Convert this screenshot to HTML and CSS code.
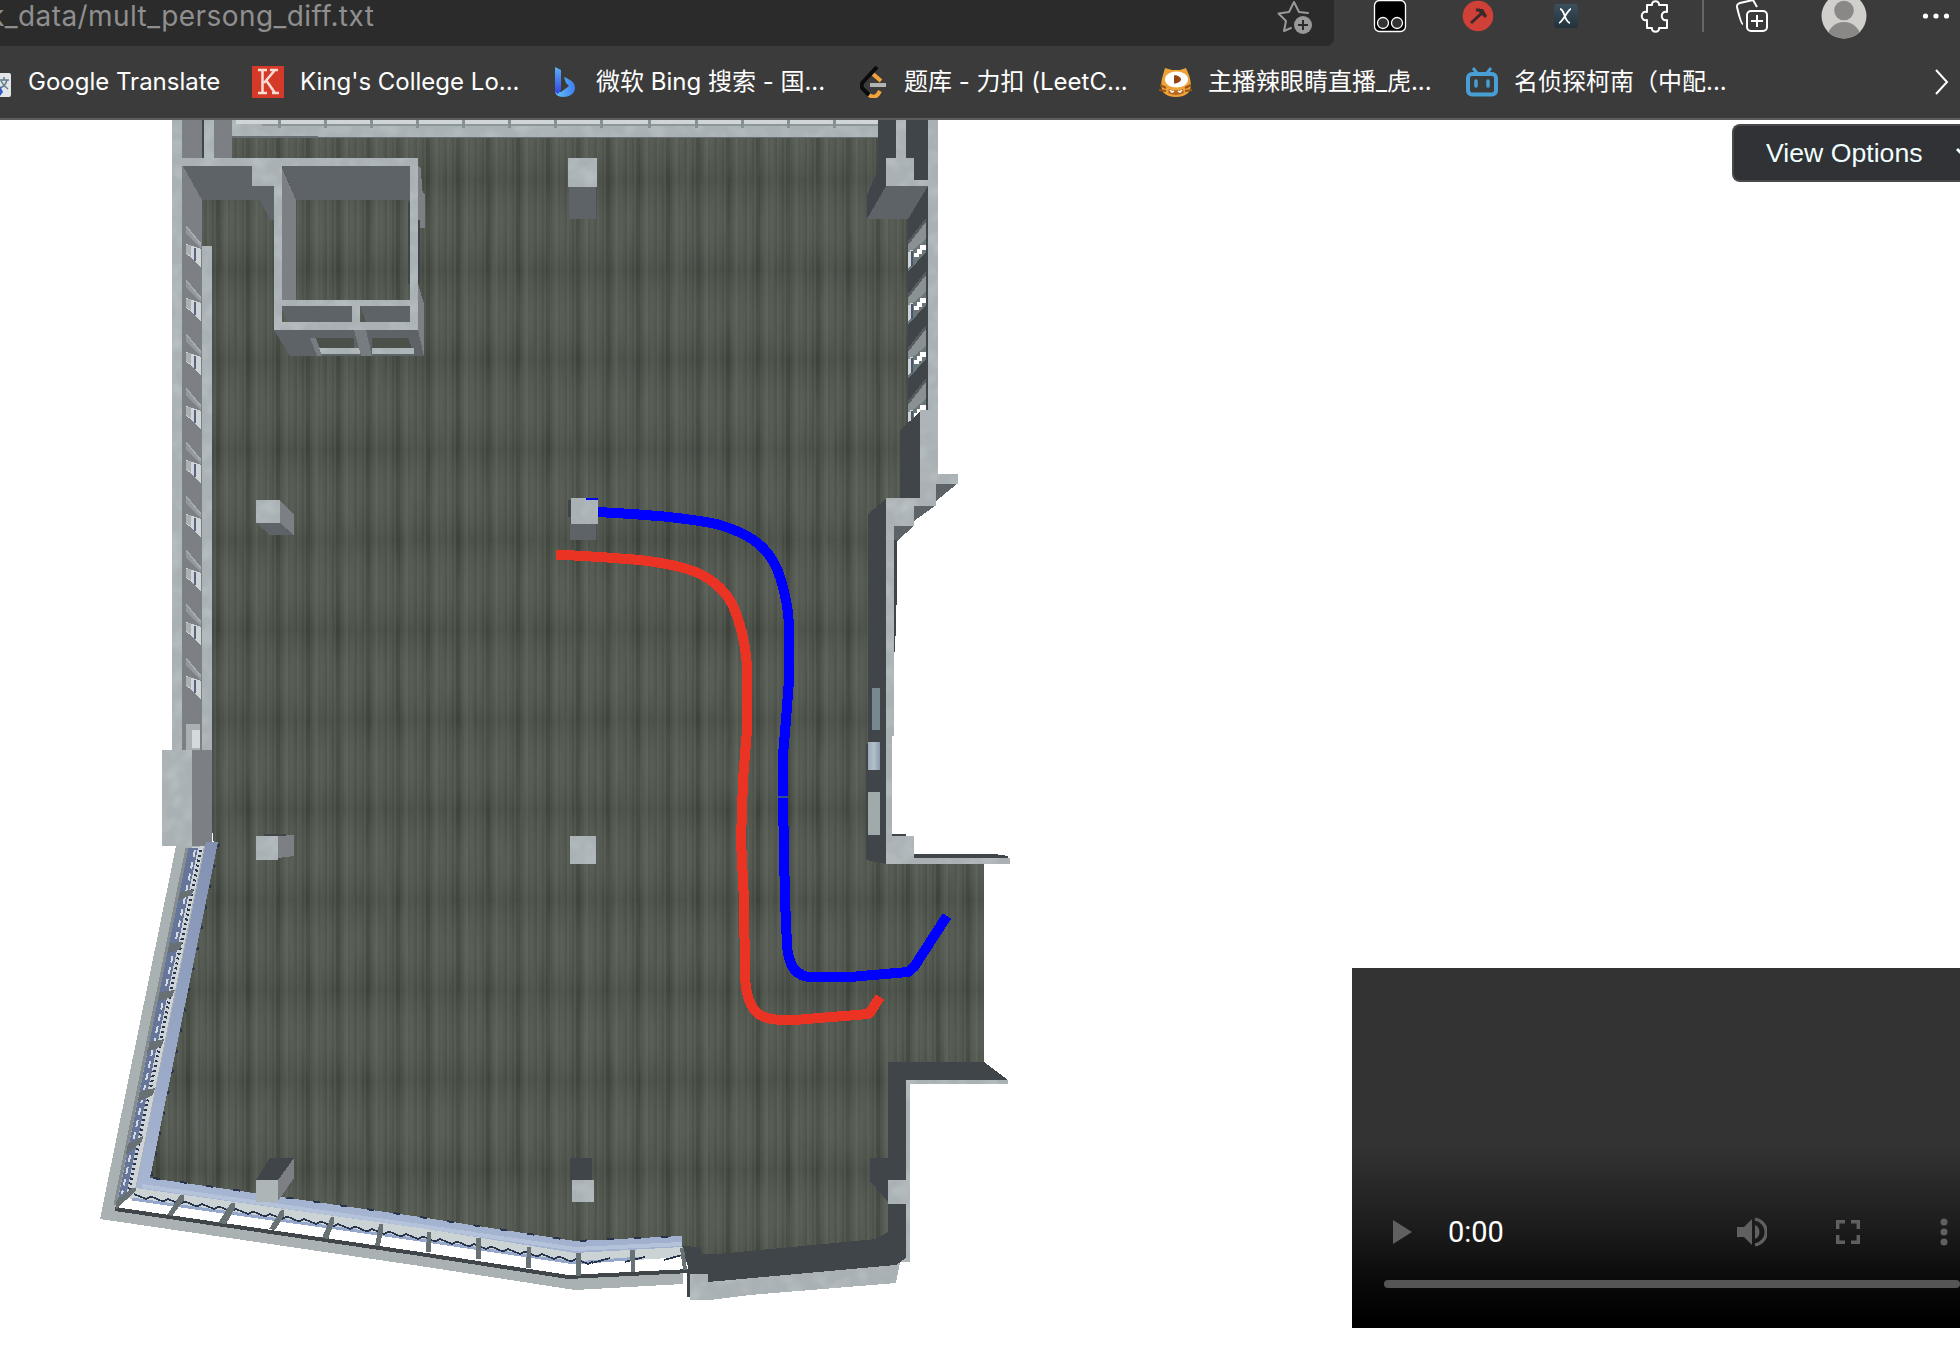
FILE: index.html
```html
<!DOCTYPE html>
<html lang="en">
<head>
<meta charset="utf-8">
<title>mult_persong_diff.txt</title>
<link rel="stylesheet" href="styles.css">
</head>
<body>
<header class="chrome">
  <div class="toolbar">
    <div class="address"><span class="url">k_data/mult_persong_diff.txt</span>
      <svg class="star" width="36" height="36" viewBox="0 0 36 36"><path d="M31 13 22 12 17 2 12 12 1.500 13.500 9 21 7 31 14 28" fill="none" stroke="#999" stroke-width="2" stroke-linejoin="round" stroke-linecap="round"/><circle cx="26" cy="25" r="9" fill="#999"/><path d="M26 20v10M21 25h10" stroke="#2b2b2b" stroke-width="2"/></svg>
    </div>
    <svg class="tools" width="626" height="46" viewBox="1334 0 626 46">
      <rect x="1374.500" y=".5" width="31" height="31" rx="5" fill="#000" stroke="#fff" stroke-width="1.300"/>
      <circle cx="1383" cy="23" r="5.500" fill="#333" stroke="#fff" stroke-width="1.300"/><circle cx="1397" cy="23" r="5.500" fill="#333" stroke="#fff" stroke-width="1.300"/>
      <circle cx="1478" cy="16" r="15.300" fill="#cf4037"/><path d="M1471 23 1483 12M1476 10l3 0 7 7" fill="none" stroke="#3b2a29" stroke-width="3"/><path d="M1475 9h8l4 7z" fill="#3b2a29"/>
      <rect x="1554" y="4" width="24" height="24" rx="3" fill="url(#xg)"/><path d="M1560 9c5 0 4 13 10 14M1571 9c-3 0-8 13-12 14" fill="none" stroke="#fff" stroke-width="1.800"/>
      <path d="M1647 5h5c-1-5 8-5 7 0h8v7c-7-2-7 10 0 8v8h-8c1 5-8 5-7 0h-5v-8c-7 2-7-10 0-8z" fill="none" stroke="#fff" stroke-width="2" stroke-linejoin="round"/>
      <path d="M1703 0v32" stroke="#666" stroke-width="2"/>
      <path d="M1743 24c-2 0-6-17-6-17-.5-3 1-3 3-4l13-3 4 7" fill="none" stroke="#fff" stroke-width="2"/><rect x="1747" y="11" width="20" height="20" rx="4" fill="#3b3b3b" stroke="#fff" stroke-width="2"/><path d="M1757 15v12M1751 21h12" stroke="#fff" stroke-width="2"/>
      <clipPath id="av"><circle cx="1844" cy="16" r="22.500"/></clipPath><g clip-path="url(#av)"><rect x="1821" y="-7" width="46" height="46" fill="#d0cfcc"/><circle cx="1844" cy="10.500" r="9.800" fill="#898886"/><circle cx="1844" cy="39" r="17" fill="#898886"/></g>
      <g fill="#fff"><circle cx="1925.500" cy="16" r="2.600"/><circle cx="1936" cy="16" r="2.600"/><circle cx="1946.500" cy="16" r="2.600"/></g>
      <defs><linearGradient id="xg" x2="0" y2="1"><stop stop-color="#3b4f5c"/><stop offset="1" stop-color="#22323b"/></linearGradient></defs>
    </svg>
  </div>
  <nav class="bookmarks">
    <a class="bm bm-translate"><svg width="12" height="32"><rect x="-10" y="7" width="21" height="24" rx="2" fill="#e3e6e8"/><path d="M0 14h9M4 11v3M7 14c-1 4-4 7-7 8M1 15c2 4 4 6 7 8" stroke="#607d8b" stroke-width="1.500" fill="none"/><path d="M0 20l3 6-3 4z" fill="#3556c8"/></svg><span>Google Translate</span></a>
    <a class="bm bm-kings"><svg width="32" height="32"><rect width="32" height="32" fill="#d53a28"/><path d="M6 4h9M6 27h9M18 4h8M20 27h7M10.500 4v23M23 4 12 17M14 14l9 13" stroke="#f7ddd6" stroke-width="2.500" fill="none"/></svg><span>King's College Lo...</span></a>
    <a class="bm bm-bing"><svg width="22" height="32"><defs><linearGradient id="b1" x2="0" y2="1"><stop stop-color="#5bb2f7"/><stop offset="1" stop-color="#3045e0"/></linearGradient><linearGradient id="b2"><stop stop-color="#62c8f5"/><stop offset="1" stop-color="#3f7cf0"/></linearGradient></defs><path d="M10 11c7 3 11 5 11 11 0 6-6 9-12 9C4 31 1 28 1 25l6 1 8-6-3-3z" fill="url(#b2)"/><path d="M1 1 7 4V24L4 28 1 26Z" fill="url(#b1)"/></svg><span>微软 Bing 搜索 - 国...</span></a>
    <a class="bm bm-leet"><svg width="26" height="32"><path d="M13 8l8 7M9 29c6 4 9 0 11-4" stroke="#f2a33c" stroke-width="4" fill="none"/><path d="M17 1 3 16q-3 4 0 7l6 6" stroke="#0b0b0b" stroke-width="4" fill="none"/><path d="M10 19h16" stroke="#b3b3b3" stroke-width="4"/></svg><span>题库 - 力扣 (LeetC...</span></a>
    <a class="bm bm-huya"><svg width="33" height="32"><path d="M4 9 6 2l7 2h8l6-2 3 7c5 16-1 22-13 22S-1 25 4 9z" fill="#eda338"/><path d="M1 19l6 3M0 24l7 1M32 19l-6 3M33 24l-7 1" stroke="#9c5416" stroke-width="2"/><ellipse cx="17.500" cy="13.500" rx="11.500" ry="8" fill="#fff"/><path d="M15 9.500c3-1 7 2 7 4s-4 4-7 4z" fill="#934513"/><path d="M10 23q7 2.500 14 0l1 4q-8 4-16 0z" fill="#b9691f"/><path d="M11 24l2 2 2-1M19 25l2 1 2-2" stroke="#fff" stroke-width="1.500" fill="none"/></svg><span>主播辣眼睛直播_虎...</span></a>
    <a class="bm bm-bili"><svg width="33" height="32" fill="none" stroke="#489fd5"><rect x="3" y="8" width="28" height="20.500" rx="4" stroke-width="4"/><path d="M8 2l4 5M26 2l-4 5" stroke-width="3"/><path d="M11 15v5M23 15v5" stroke-width="3.500" stroke-linecap="round"/></svg><span>名侦探柯南（中配...</span></a>
    <svg class="more" width="16" height="26"><path d="M2 1 13 13 2 25" fill="none" stroke="#fff" stroke-width="2"/></svg>
  </nav>
</header>
<main class="page">
<svg class="plan" width="1300" height="1252" viewBox="0 120 1300 1252">
  <defs>
    <pattern id="planks" width="30" height="90" patternUnits="userSpaceOnUse">
      <rect width="30" height="90" fill="#4f554d"/><rect x="2" width="2" height="90" fill="#484e46"/><rect x="6" width="4" height="90" fill="#41473f"/><rect x="10" width="2" height="90" fill="#4a5048"/><rect x="14" width="2" height="90" fill="#555b53"/><rect x="16" width="2" height="90" fill="#596057"/><rect x="20" width="3" height="90" fill="#535951"/><rect x="25" width="2" height="90" fill="#4a5048"/><rect x="27" width="2" height="90" fill="#555b53"/>
    </pattern>
    <linearGradient id="bands" x1="0" y1="0" x2="0" y2="90" gradientUnits="userSpaceOnUse" spreadMethod="repeat"><stop stop-color="#000" stop-opacity=".06"/><stop offset=".5" stop-color="#fff" stop-opacity=".03"/><stop offset="1" stop-color="#000" stop-opacity=".06"/></linearGradient>
    <filter id="grain" x="0" y="0" width="1" height="1" color-interpolation-filters="sRGB"><feTurbulence type="fractalNoise" baseFrequency=".13 .012" numOctaves="2" seed="4"/><feColorMatrix values="0 0 0 0 .38  0 0 0 0 .41  0 0 0 0 .37  1.600 0 0 0 -.55"/><feComposite in2="SourceGraphic" operator="in"/></filter>
    <filter id="mottle" x="0" y="0" width="1" height="1" color-interpolation-filters="sRGB"><feTurbulence type="fractalNoise" baseFrequency=".06" numOctaves="2" seed="8"/><feColorMatrix values="0 0 0 0 .74  0 0 0 0 .77  0 0 0 0 .78  1.500 0 0 0 -.6"/><feComposite in2="SourceGraphic" operator="in" result="n"/><feMerge><feMergeNode in="SourceGraphic"/><feMergeNode in="n"/></feMerge></filter>
    <linearGradient id="sill" x1="210" y1="850" x2="140" y2="1180" gradientUnits="userSpaceOnUse"><stop stop-color="#8392b3"/><stop offset="1" stop-color="#a5b5d2"/></linearGradient>
    <linearGradient id="glass" x2="1" y2="0"><stop stop-color="#9faab5"/><stop offset=".5" stop-color="#b2c1cc"/><stop offset="1" stop-color="#8b99ab"/></linearGradient>
    <path id="floor" d="M202 138H890V200L910 219V420L902 500H890V864H984V1064H900V1250L700 1262H682V1240L575 1246 420 1222 148 1182 214 845 202 750Z"/>
    <g id="lw"><path d="M186-17 201 0V5L186-11z" fill="#92989c"/><path d="M186-17v-2L201-1V2z" fill="#a6adb0"/><path d="M186 0 201 5V24L192 14 186 10z" fill="#d0d5d7"/><path d="M186 1h5v11l-5-3z" fill="#a9b1b3"/><path d="M194 4h2v13h-2z" fill="#566480"/></g>
    <g id="rw"><path d="M908 0 926-23V-6L908 9z" fill="#899193"/><path d="M908-4 926-27V-23L908 0z" fill="#555d60"/><path d="M908 9 926-6V7L908 27z" fill="#6b7678"/><path d="M908 7h2V5h3v13l-5 6z" fill="#d0d6d8"/><path d="M911 6h2v15h-2z" fill="#485674"/><path d="M914 8h3v-4h3v-4h6v5h-4v4h-3v3h-5z" fill="#fff"/></g>
  </defs>
  <g shape-rendering="crispEdges">
    <use href="#floor" fill="url(#planks)"/><use href="#floor" fill="url(#bands)"/><use href="#floor" filter="url(#grain)" opacity=".4"/>
    <g fill="#7c8084">
      <path d="M182 120h20v38h-20zM214 120h18v38h-18zM182 164 202 200V750h-20zM192 750h20v96h-20zM282 168 296 200V300h-14zM418 166 421 168 422 190 425 195V228H420V220h-2zM418 284 424 304V356H418zM280 500 294 515V535L280 523zM278 835h16v21l-16 2z"/>
    </g>
    <g fill="#5e6368">
      <path d="M182 164H252V186H274V220H270L260 200H202zM282 166H410V200H296zM280 306H352V322H288zM360 306H410V322H366zM274 330H418L424 356H290zM569 187h27v32h-27zM570 524h26v16h-26zM256 523H280L294 535H270zM936 484H957L936 501zM914 506H935L914 521zM894 526H914L897 541H894z"/>
    </g>
    <g fill="#40454a">
      <path d="M878 120H896V158H886V186L867 219V195L878 170zM906 120H928V180H906zM928 186V412L908 428V215zM900 430 920 412V498H900zM868 514 886 499V864L866 860V744H868zM892 834h14v2h-14zM914 854h80l14 2v2H914zM888 1062H984L1008 1080H906V1258L896 1265 708 1282 690 1274 682 1246 700 1247 702 1254H718L876 1239 888 1232V1202L870 1181V1158H888zM570 1158h22v22h-22zM256 1180 270 1158H294L278 1180zM687 1270h3v27h-3zM264 834h22v2h-22zM408 202h2v82h-2zM418 220h2v64h-2zM894 540h3v50l-2 62h-1zM202 120h2v38h-2zM568 500h3v17h-3z"/>
    </g>
    <path d="M886 186H928L908 219H867z" fill="#5e6368"/>
    <g fill="#a9b1b4" filter="url(#mottle)">
      <path d="M172 120h10v630h-10zM204 120h10v38h-10zM232 120h646v18H232zM172 158h246v8H172zM252 158h30v28h-30zM274 158h8v172h-8zM410 158h8v172h-8zM274 300h144v6H274zM352 306h8v16h-8zM274 322h144v8H274zM202 246h10v504h-10zM318 348h42v6h-42zM372 348h42v6h-42zM162 750h30v96h-30zM568 158h29v29h-29zM256 500h24v23h-24zM571 498h27v26h-27zM256 836h22v24h-22zM570 836h26v28h-26zM256 1180h22v22h-22zM572 1180h22v22h-22zM896 120h10v38h-10zM928 120h10v354h-10zM886 158h28v28h-28zM914 180h14v6h-14zM920 410h18v64h20v10h-22v22h-22v20h-20v210h-2v100h22v22h96v6H886V498h34zM906 1080h102v4H910v178H900l-4 21-146 12-40 5h-20v-26h18v8l188-17 10-7zM888 1180h18v24h-18z"/>
    </g>
    <path d="M232 136h86v2h-86zM318 137h560v1H318z" fill="#697074"/>
    <path d="M316 338h38v10h-34zM372 338h36l4 10h-40z" fill="#4b5149"/>
    <path d="M310 338h6l6 18h-5zM354 330h12l6 26h-11z" fill="#777c80"/>
    <path d="M236 120h642v4H236z" fill="#d0d6d8"/><path d="M262 124h616v2H262z" fill="#8d9698"/>
    <path d="M279 120v8M325 120v8M371 120v8M417 120v8M463 120v8M509 120v8M555 120v8M601 120v8M649 120v8M696 120v8M742 120v8M788 120v8M834 120v8" stroke="#879092" stroke-width="3"/>
    <use href="#lw" y="244"/><use href="#lw" y="298"/><use href="#lw" y="352"/><use href="#lw" y="406"/><use href="#lw" y="460"/><use href="#lw" y="514"/><use href="#lw" y="568"/><use href="#lw" y="622"/><use href="#lw" y="676"/><path d="M186 724h14v26h-14z" fill="#a9b1b3"/><path d="M192 730h8v18h-8z" fill="#d4d9db"/>
    <use href="#rw" y="245"/><use href="#rw" y="298"/><use href="#rw" y="352"/><use href="#rw" y="405"/>
    <path d="M900 430 920 412V498H900z" fill="#40454a"/><path d="M920 410h18v20h-18z" fill="#adb5b8"/>
    <path d="M872 688h8v42h-8z" fill="#788890"/><path d="M868 742h12v28h-12z" fill="url(#glass)"/><path d="M868 792h12v43h-12z" fill="#a1aaaa"/>
    <!-- glazed south-west facade -->
    <path d="M176 846H206L136 1190 420 1228 575 1253 683 1247V1284L575 1290 420 1266 100 1219z" fill="#a9b1b3"/>
    <path d="M188 848 204 846 134 1194 119 1200z" fill="#cdd3d6"/>
    <path d="M188 848 198 848 126 1196 118 1200z" fill="#66769a"/>
    <path d="M201 850 128 1194" stroke="#27324b" stroke-width="3" stroke-dasharray="2 3"/>
    <path d="M195 850 122 1194" stroke="#d5dbe0" stroke-width="2" stroke-dasharray="7 5"/>
    <path d="M187 848 115 1205" stroke="#858d8f" stroke-width="3"/>
    <path d="M180 892 194 889 192 895 179 900zM170 943 183 942 180 949 168 953zM160 992 175 990 172 997 158 1001zM150 1042 164 1039 162 1046 147 1052zM140 1091 155 1088 153 1095 138 1102zM128 1144 143 1136 142 1142 126 1154z" fill="#687073"/>
    <path d="M206 842H218L150 1178 420 1217 575 1241 682 1236V1247L575 1253 420 1229 136 1189z" fill="url(#sill)"/>
    <path d="M142 1186 420 1226 575 1249 682 1244" stroke="#b4c3da" stroke-width="4" fill="none"/>
    <path d="M219 844 151 1178" stroke="#28324a" stroke-width="2" stroke-dasharray="3 18"/><path d="M153 1178 420 1217 575 1241 682 1236" fill="none" stroke="#28324a" stroke-width="2" stroke-dasharray="7 20"/>
    <path d="M135 1188 420 1228 575 1253 682 1247V1257L575 1264 420 1240 127 1198z" fill="#ccd3d5"/>
    <path d="M126 1198 420 1240 575 1264 683 1257V1271L568 1277 420 1254 116 1208z" fill="#fff"/>
    <path d="M132 1199 420 1240 575 1263 640 1258" stroke="#95a8cb" stroke-width="3" fill="none"/>
    <path d="M134 1194l12 5 5-2.500 12 5 5-2.500 12 5 5-2.500 12 5 5-2.500 12 5 5-2.500 12 5 5-2.500 12 5 5-2.500 12 5 5-2.500 12 5 5-2.500 12 5 5-2.500 12 5 5-2.500 12 5 5-2.500 12 5 5-2.500 12 5 5-2.500 12 5 5-2.500 12 5 5-2.500 12 5 5-2.500 12 5 5-2.500 12 5 5-2.500 12 5 5-2.500 12 5 5-2.500 12 5 5-2.500 12 5 5-2.500 12 5 5-2.500 12 5 5-2.500 12 5 5-2.500 12 5 5-2.500M592 1263l18-5M625 1262l20-5M664 1260l18-5" stroke="#26334b" stroke-width="1.700" fill="none"/>
    <path d="M115 1209 420 1254 568 1277 690 1271" stroke="#40454a" stroke-width="4" fill="none"/>
    <path d="M132 1188h4v3l-20 18v-8zM180 1195h4v5l-12 16-5-1zM231 1203h4v5l-9 16-8-1zM281 1210h3v6l-9 14-6-1zM331 1217h3v6l-6 16-6-1zM379 1224h4v6l-3 16h-5zM427 1232h4v20h-5zM476 1238h5v21h-5zM527 1247h4v21h-5zM576 1253h5v23h-5zM630 1250h5v22h-4zM680 1248h4l3 22h-4z" fill="#687275"/>
    <path d="M256 1180h22v22h-22z" fill="#adb5b7"/><path d="M278 1180 294 1158V1178L278 1201z" fill="#7c8084"/>
  </g>
  <g fill="none" stroke-width="10" shape-rendering="crispEdges" stroke-linejoin="round">
    <path stroke="#00f" d="M598 512 632 514 664 516.500Q705 521 720 525 750 534 764 549 775 560 781 580 788 603 789 625V680L786 720 783 755V800L785 900 787 945Q789 977 812 977L850 977 908 972 914 967 947 916"/>
    <path stroke="#eb3323" d="M556 554.500 600 557 640 560Q680 565 698 573 722 584 733 606 744 630 747 665V730L743 780 741 840 744 900 745 975Q746 1008 762 1016 772 1021 795 1020L868 1014 871 1011 880 997"/>
  </g><path d="M586 498h12v2h-12z" fill="#00f"/><path d="M778 796h10v2h-10z" fill="#3a4a90"/>
</svg>
<aside class="side">
  <button class="view"><span>View Options</span><svg width="12" height="12"><path d="M1 2 6 7 11 2" fill="none" stroke="#f0ffff" stroke-width="3"/></svg></button>
  <section class="player">
    <div class="controls">
      <svg class="play" width="19" height="24"><path d="M0 0 19 12 0 24z" fill="#606060"/></svg>
      <span class="time">0:00</span>
      <svg class="volume" width="30" height="30" fill="#606060"><path d="M0 10h7l8-8v26l-8-8H0zM18 8c6 2 6 12 0 14z"/><path d="M18 2c15 3 15 23 0 26" fill="none" stroke="#606060" stroke-width="3.200"/></svg>
      <svg class="full" width="24" height="24"><path d="M1.700 9V1.700H9M15 1.700h7.300V9M22.300 15v7.300H15M9 22.300H1.700V15" fill="none" stroke="#606060" stroke-width="3.400"/></svg>
      <svg class="dots" width="8" height="28" fill="#606060"><circle cx="4" cy="4" r="3.500"/><circle cx="4" cy="14" r="3.500"/><circle cx="4" cy="24" r="3.500"/></svg>
    </div>
    <div class="track"></div>
  </section>
</aside>
</main>
</body>
</html>
```
FILE: styles.css
```css
* { box-sizing: border-box; }
body { margin: 0; width: 1960px; height: 1372px; overflow: hidden; background: #fff; font-family: Inter, "Noto Sans CJK SC", sans-serif; }
svg { display: block; flex: none; overflow: hidden; }
.chrome { height: 120px; background: #3b3b3b; border-bottom: 2px solid #5d5d5d; }
.toolbar { display: flex; height: 46px; }
.address { width: 1334px; height: 46px; background: #2b2b2b; border-bottom-right-radius: 8px; display: flex; justify-content: space-between; padding-right: 21px; overflow: hidden; }
.url { margin-left: -11px; font-size: 28px; letter-spacing: .42px; line-height: 33px; color: #8f8f8f; white-space: nowrap; }
.bookmarks { display: flex; height: 72px; padding-top: 20px; }
.bm { display: flex; height: 32px; color: #fff; font-size: 24px; line-height: 32px; white-space: nowrap; flex: none; }
.bm-translate { width: 252px; gap: 16px; }
.bm-kings { width: 302px; gap: 16px; }
.bm-bing { width: 306px; gap: 20px; }
.bm-leet { width: 299px; gap: 18px; }
.bm-huya { width: 306px; gap: 16px; }
.bm-bili { width: 469px; gap: 16px; }
.more { margin-top: 3px; }
.page { display: flex; height: 1252px; }
.plan { width: 1300px; }
.side { width: 660px; display: flex; flex-direction: column; justify-content: space-between; align-items: flex-end; padding: 4px 0 44px; overflow: hidden; }
.view { width: 228px; height: 58px; padding: 0 0 0 32px; display: flex; align-items: center; gap: 33px; background: #303236; border: 2px solid #48494b; border-right: 0; border-radius: 8px 0 0 8px; color: #f0ffff; font: 26.67px "Liberation Sans", sans-serif; white-space: nowrap; overflow: hidden; }
.player { width: 608px; height: 360px; background: linear-gradient(#333 0, #333 178px, #1d1d1d 256px, #0b0b0b 310px, #000 352px); display: flex; flex-direction: column; justify-content: flex-end; padding: 0 0 40px 32px; }
.controls { display: flex; align-items: center; height: 32px; margin-bottom: 32px; padding-left: 9px; }
.time { width: 289px; margin-left: 36px; color: #fff; font: 29px Roboto, sans-serif; }
.full { margin-left: 69px; }
.dots { margin-left: 80px; }
.track { height: 8px; border-radius: 4px; background: #555; }
```
